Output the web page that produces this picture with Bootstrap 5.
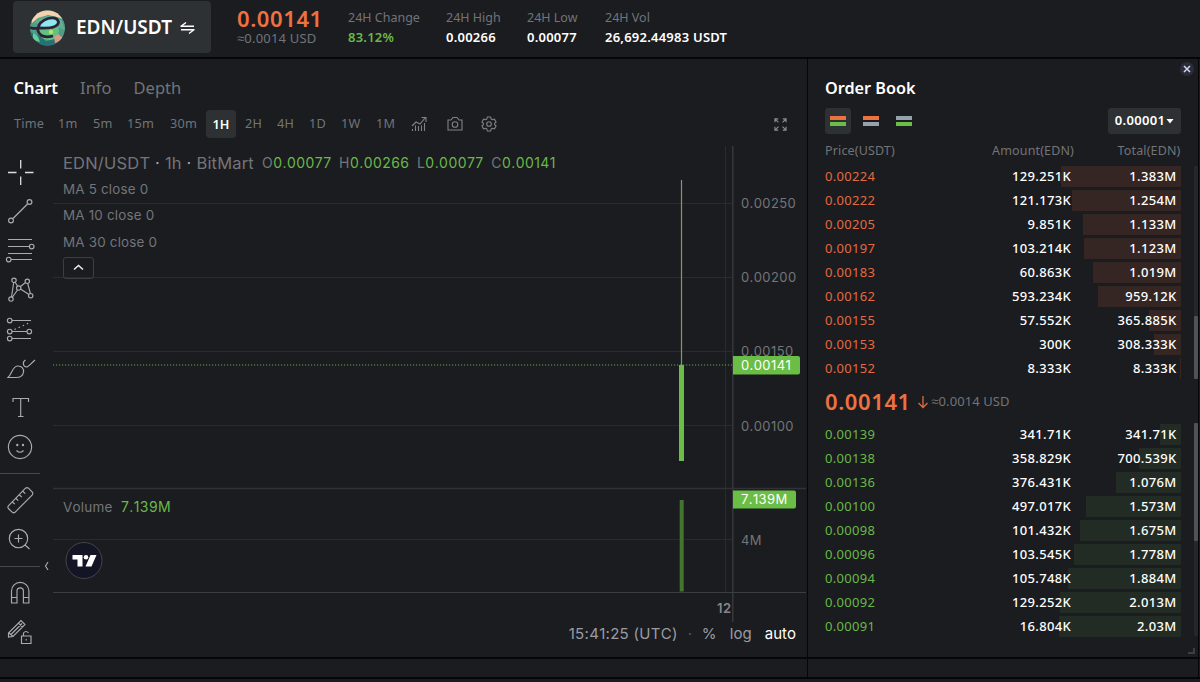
<!DOCTYPE html>
<html lang="en">
<head>
<meta charset="utf-8">
<title>EDN/USDT</title>
<link href="https://cdn.jsdelivr.net/npm/bootstrap@5.3.0/dist/css/bootstrap.min.css" rel="stylesheet">
<style>
:root{--bg:#1b1c1f;--chip:#2d3133;--dim:#717479;--up:#6abd45;--down:#ee7140}
body{background:var(--bg);color:#fff;font-family:"Noto Sans",sans-serif;font-size:13px;letter-spacing:.025em;width:1200px;height:682px;overflow:hidden;line-height:1.2}
.dim{color:var(--dim)}.up{color:#69b84a}.down{color:#e26a42}
.topbar{height:59px;border-bottom:2px solid #060607;padding-left:13px}
.pair{width:198px;height:52px;background:var(--chip);border-radius:4px;margin-top:1px;padding-left:17px;padding-top:1px;font-size:19px;font-weight:600;letter-spacing:0}
.last{margin-left:26px;width:111px;padding-top:5px}
.last b{font-size:22px;font-weight:600;color:var(--down);line-height:26px;letter-spacing:.6px}
.last span{font-size:13px;line-height:15px;white-space:nowrap;letter-spacing:.2px}
.stat{padding-top:8px;line-height:19px;white-space:nowrap}
.stat .dim{font-size:12.5px;letter-spacing:0;height:20px}
.stat b{font-weight:600;letter-spacing:.23px}
.left{width:807px}
.main{height:598px}
.tabs{height:57px;padding:0 13.5px;gap:22px;font-size:16.5px;letter-spacing:0}
.tabs b{font-weight:600}
.times{height:30px;font-size:12.7px;letter-spacing:.2px;padding-left:14px;margin-top:-7px}
.times span{display:block;white-space:nowrap;flex:none}
.times .on{background:var(--chip);border-radius:4px;height:28px;line-height:29px;text-align:center;font-weight:600;color:#fff}
.tools{width:53px;padding-top:14px;flex:none}
.tools svg{display:block;fill:none;stroke:#a9abb3;stroke-width:1.15}
.rule{width:40px;height:16px;padding-top:8px}
.rule i{display:block;border-top:1px solid #46484e}
.plot{font-family:Inter,sans-serif;letter-spacing:0;margin-top:7px;font-kerning:none}
.plot>svg{display:block}
.legend{left:10px;top:4px;font-size:13.4px;color:#73757a}
.legend div{height:26.2px;line-height:26px;white-space:nowrap}
.ohlc{font-size:14px;letter-spacing:.45px}
.fold{width:31px;height:22px;border:1px solid #3c3e43;border-radius:3px;margin-top:2px}
.vol{left:10px;top:353px;font-size:13.5px;color:#73757a;letter-spacing:.2px}
.foot{height:24px;font-size:15px;color:#9a9ca5;padding-right:11px}
.edge{border-right:1px solid #060607}
.book{width:392px;padding:0 17px;border:solid #060607;border-width:0 1px}
.book h2{font-size:16.2px;font-weight:600;letter-spacing:0;margin:0;padding-top:18px;line-height:22px}
.sw{width:26px;height:26px;border-radius:3px}
.sw i{display:block;width:16px;height:4px;margin:1px}
.step{width:73px;height:26px;background:var(--chip);border-radius:3px;font-weight:600}
.heads{height:30px;line-height:33px;font-size:12.5px;letter-spacing:.15px}
.rw{width:355.5px;height:24px;line-height:24px}
.rw>*{z-index:1}
.bar{position:absolute;right:0;top:2px;height:21px;z-index:0!important}
.p{width:120px}.a{width:126px;text-align:right;font-weight:500}.t{width:105.5px;text-align:right;font-weight:500}
.mid{height:41.6px}
.scr{width:4px;border-radius:1px;background:#50515b;position:absolute;left:1194px}
.close-x{left:1180px;top:62px;width:14px;height:14px;border-radius:7px;background:#292d3d}
</style>
</head>
<body class="position-relative">
<header class="topbar d-flex">
  <div class="pair d-flex align-items-center">
    <svg width="36" height="36" viewBox="0 0 36 36" style="margin-right:10px"><defs><clipPath id="c"><circle cx="17.5" cy="18" r="17.5"/></clipPath></defs><g clip-path="url(#c)"><rect width="36" height="36" fill="#4f9c87"/><path d="M0 0h36v10L27 7l-9-2L8 8l-6 5z" fill="#f4d2ae"/><path d="M4 13Q16 0 32 11L35 20 27 17z" fill="#61ad90"/><path d="M0 22l8 3 8 6 14-3 2 8H0z" fill="#267274"/><path d="M3 23q5 1 7 9l-7-2z" fill="#69c99b"/><ellipse cx="19" cy="21" rx="10" ry="9" fill="#61c17e"/><path d="M9 18Q17 5 28 10 31 20 9 18z" fill="#8beaeb"/><path d="M0 17.500Q5 19 10 18 28 19 28.500 12 27 6.500 18 8.500 7 12 8 21 11 29 23 26" fill="none" stroke="#30213b" stroke-width="2.800"/><path d="M24 27l4-3 5 4-3 4-5 1z" fill="#dc9a8a"/><circle cx="21" cy="22" r="2.2" fill="#b4e36a"/></g></svg>
    <span>EDN/USDT</span>
    <svg width="15" height="14" viewBox="0 0 15 14" class="ms-2" fill="none" stroke="#fff" stroke-width="1.4"><path d="M.5 5.200h13.500M1 5.200L6 1.500M14.500 8.800H1M14 8.800L9 12.500"/></svg>
  </div>
  <div class="last d-flex flex-column"><b>0.00141</b><span class="dim">≈0.0014 USD</span></div>
  <div class="stat" style="width:98px"><div class="dim">24H Change</div><b class="up">83.12%</b></div>
  <div class="stat" style="width:81px"><div class="dim">24H High</div><b>0.00266</b></div>
  <div class="stat" style="width:78px"><div class="dim">24H Low</div><b>0.00077</b></div>
  <div class="stat"><div class="dim">24H Vol</div><b>26,692.44983 USDT</b></div>
</header>
<main class="main d-flex">
  <section class="left">
    <nav class="tabs d-flex align-items-center"><b>Chart</b><span class="dim">Info</span><span class="dim">Depth</span></nav>
    <div class="times d-flex align-items-center dim">
      <span style="width:44px">Time</span><span style="width:35px">1m</span><span style="width:34px">5m</span><span style="width:43px">15m</span><span style="width:36px">30m</span><span class="on" style="width:30px">1H</span><span style="width:32px;margin-left:9px">2H</span><span style="width:32px">4H</span><span style="width:32px">1D</span><span style="width:35px">1W</span><span style="width:35px">1M</span>
      <svg width="16" height="16" viewBox="0 0 16 16" fill="none" stroke="#808287" stroke-width="1.1"><path d="M1 10l4-4 4 2 5-6M10.500 1.500H15V6M1.500 15v-2M4.500 15V9.500M7.500 15v-5M10.500 15V9.500M13.500 15V7"/></svg>
      <svg style="margin-left:20px" width="16" height="16" viewBox="0 0 16 16" fill="none" stroke="#808287" stroke-width="1.1"><path d="M1 4h3l2-2.500h4L12 4h3v10H1z"/><circle cx="8" cy="8.500" r="2.800"/></svg>
      <svg style="margin-left:18px" width="16" height="16" viewBox="0 0 16 16" fill="none" stroke="#808287" stroke-width="1.100" stroke-linejoin="round"><path d="M6.300 1h3.400l.4 2 1.400.8 1.900-.7 1.700 2.900-1.500 1.300v1.400l1.500 1.300-1.700 2.900-1.900-.7-1.400.8-.4 2H6.300l-.4-2-1.400-.8-1.900.7L.9 10l1.500-1.300V7.300L.9 6l1.700-2.900 1.900.7L5.900 3z"/><circle cx="8" cy="8" r="2.300"/></svg>
      <svg class="ms-auto" style="margin-right:20px" width="13" height="13" viewBox="0 0 14 14" fill="none" stroke="#8b8d91" stroke-width="1.200"><path d="M1 4.500V1h3.500M1 1l3.800 3.800M9.500 1H13v3.500M13 1L9.200 4.800M1 9.500V13h3.500M1 13l3.800-3.800M9.500 13H13V9.500M13 13L9.200 9.200"/></svg>
    </div>
    <div class="d-flex">
      <aside class="tools position-relative">
        <svg width="40" height="39" style="stroke:#dcdde1"><path d="M20.700 7v8.500M20.700 23.500V32M8 19.500h8.500M25 19.500h8.500" stroke-width="1.300"/></svg>
        <svg width="40" height="39"><path d="M13 26.500L27.500 12"/><circle cx="11" cy="28.500" r="2.400"/><circle cx="29.500" cy="10" r="2.400"/></svg>
        <svg width="40" height="39"><path d="M8 8.500h24M8 15.500h21M8 22.500h24M11 28.500h21"/><circle cx="31.700" cy="15.500" r="2.300"/><circle cx="8.700" cy="28.500" r="2.300"/></svg>
        <svg width="40" height="39"><path d="M13.700 12.500L11.500 27M15 12l2.500 4M20.500 16.500l5-4M27.700 13.500l2.700 10M20.500 19l8.500 5.500M17.500 20l-5 7"/><circle cx="14" cy="10.300" r="2.200"/><circle cx="27.300" cy="11.300" r="2.200"/><circle cx="18.700" cy="18" r="2.200"/><circle cx="30.700" cy="25.700" r="2.200"/><circle cx="11" cy="29" r="2.200"/></svg>
        <svg width="40" height="39"><path d="M12 11.500h19M12 22.500h15M12 29.500h19"/><path d="M14.500 20.500L31 13" stroke-dasharray="1.500 3"/><circle cx="9.700" cy="11.500" r="2.300"/><circle cx="9.700" cy="22.500" r="2.300"/><circle cx="29.300" cy="22.500" r="2.300"/><circle cx="9.700" cy="29.500" r="2.300"/></svg>
        <svg width="40" height="39"><path d="M8 29.500C13 25 12 18 18 18 22 18 24 21 23.500 24 23 28 20 29.500 16 29.500zM25.500 12C22 14 23 18.500 26.500 19 28 19 28.500 18 35 12"/></svg>
        <svg width="40" height="39"><path d="M13 15v-3.500h15.500V15M20.700 11.500v18M18 29.500h5.500"/></svg>
        <svg width="40" height="39"><circle cx="20" cy="21" r="11.600"/><path d="M16.500 24.500q3.500 3.500 7 0"/><circle cx="17.300" cy="19" r=".6"/><circle cx="23" cy="19" r=".6"/></svg>
        <div class="rule"><i></i></div>
        <svg width="40" height="39"><path d="M25.500 7.200q1.500-1 3 0l3.800 4q1 1.300 0 2.600L15 31.300q-1.300 1-2.600 0l-4-3.800q-1-1.300 0-2.600zM23 10.500l2.300 2.200M19.500 14l2.300 2.200M16 17.500l2.300 2.200M12.500 21l2.300 2.200"/></svg>
        <svg width="40" height="39"><circle cx="18.500" cy="18.500" r="9.200"/><path d="M25 25l4.500 4M18.500 14.500v8M14.500 18.500h8"/></svg>
        <div class="rule" style="height:15px;padding-top:7px"><i></i></div>
        <svg width="40" height="39"><path d="M11.500 29V17a8.700 8.700 0 0 1 17.400 0v12h-5.500V17a3.200 3.200 0 0 0-6.400 0v12zM11.500 23.500H17M23.400 23.500h5.500"/></svg>
        <svg width="40" height="39"><path d="M8.500 24l0-4L21 7.500l4 4L13 23.500zM9 20l4 3.500M18.500 10l4 4M11 21.500l11-11M21.500 23h9.500v7.500h-9.500zM23.500 23v-3q2.500-3 5 0"/><path d="M26.200 26v1.500"/></svg>
        <svg class="position-absolute" style="left:43px;top:422px" width="7" height="10"><path d="M5 1L2.500 5 5 9"/></svg>
      </aside>
      <div class="plot position-relative flex-grow-1">
        <svg width="753" height="476" viewBox="53 146 753 476" font-family="Inter,sans-serif" font-size="13">
          <path d="M53 203.500H732M53 277.500H732M53 351.500H732M53 425.500H732M53 539.500H732M725.500 146V592" stroke="#292b2f"/>
          <path d="M732.800 146V622" stroke="#36383d" stroke-width="1.500"/><path d="M53 488.500H806" stroke="#303237" stroke-width="1.300"/><path d="M53 592.500H806" stroke="#3b3d42"/>
          <path d="M53 365H732" stroke="#68a251" stroke-dasharray="1.200 1.800" stroke-width="1.200"/>
          <path d="M681.500 180V365" stroke="#6fa55c" stroke-width="1.200"/>
          <rect x="679" y="365" width="5" height="96" fill="#6abd45"/><rect x="679.700" y="500" width="4" height="91.500" fill="#437430"/>
          <g fill="#73757a" letter-spacing=".4"><text x="741" y="208">0.00250</text><text x="741" y="282">0.00200</text><text x="741" y="356">0.00150</text><text x="741" y="430.500">0.00100</text><text x="741" y="544.500">4M</text><text x="717" y="613" font-weight="600" fill="#85878c">12</text></g>
          <path d="M733 356H798q2 0 2 2v14.500q0 2-2 2H733zM733 490.500H794q2 0 2 2v14q0 2-2 2H733z" fill="#6abd45"/>
          <g fill="#fff" letter-spacing=".4"><text x="741" y="369.800">0.00141</text><text x="741" y="504.300">7.139M</text></g>
          <circle cx="84" cy="560.500" r="18" fill="#131524" stroke="#42444d"/>
          <path d="M72.500 555h10v11.500h-5v-7h-5zM90.500 555h6L91.500 566.500h-6z" fill="#fff"/><circle cx="86" cy="557.300" r="2.300" fill="#fff"/>
        </svg>
        <div class="legend position-absolute" style="letter-spacing:.2px">
          <div class="d-flex" style="gap:7.500px"><span style="font-size:16.500px;width:191.500px">EDN/USDT <span style="color:#aaa">·</span> 1h <span style="color:#aaa">·</span> BitMart</span><span class="ohlc">O<span class="up">0.00077</span></span><span class="ohlc">H<span class="up">0.00266</span></span><span class="ohlc">L<span class="up">0.00077</span></span><span class="ohlc">C<span class="up">0.00141</span></span></div>
          <div>MA 5 close 0</div><div>MA 10 close 0</div><div>MA 30 close 0</div>
          <button class="fold bg-transparent d-flex align-items-center justify-content-center p-0"><svg width="11" height="7" fill="none" stroke="#eee" stroke-width="1.500"><path d="M1 5.500l4.500-4 4.500 4"/></svg></button>
        </div>
        <div class="vol position-absolute d-flex"><span style="width:58px">Volume</span><span class="up" style="font-size:14px;letter-spacing:.4px">7.139M</span></div>
        <div class="foot d-flex justify-content-end align-items-center"><span style="letter-spacing:.3px">15:41:25 (UTC)</span><span class="text-center" style="width:24px;color:#53555b">·</span><span style="width:28px">%</span><span style="width:35px">log</span><span class="text-white">auto</span></div>
      </div>
    </div>
  </section>
  <section class="book position-relative">
    <h2>Order Book</h2>
    <div class="d-flex align-items-center" style="margin-top:9px;gap:7px">
      <div class="sw d-flex flex-column align-items-center justify-content-center" style="background:var(--chip)"><i style="background:#ee7140"></i><i style="background:#6abd45"></i></div>
      <div class="sw d-flex flex-column align-items-center justify-content-center"><i style="background:#ee7140"></i><i style="background:#94a2ad"></i></div>
      <div class="sw d-flex flex-column align-items-center justify-content-center"><i style="background:#94a2ad"></i><i style="background:#6abd45"></i></div>
      <div class="step ms-auto d-flex align-items-center justify-content-center" style="gap:1px"><span>0.00001</span><svg width="8" height="5"><path d="M.5 0h7L4 4.500z" fill="#fff"/></svg></div>
    </div>
    <div class="d-flex dim heads"><span class="p">Price(USDT)</span><span style="width:129px;text-align:right">Amount(EDN)</span><span style="width:106.500px;text-align:right">Total(EDN)</span></div>
    <div id="asks"></div>
    <div class="mid d-flex align-items-center"><b style="font-size:22px;font-weight:600;letter-spacing:.6px;color:var(--down)">0.00141</b><svg width="12" height="14" style="margin-left:6.500px;margin-top:3px" fill="none" stroke="#e26a42" stroke-width="1.300"><path d="M6 1v11.500M1.500 8L6 12.500 10.500 8"/></svg><span class="dim" style="font-size:13px;margin-left:2px;margin-top:1px;letter-spacing:.1px">≈0.0014 USD</span></div>
    <div id="bids"></div>
    <svg class="position-absolute" style="left:380px;top:588px" width="8" height="8"><path d="M6 1v5H0" fill="none" stroke="#3c3e42" stroke-width="2"/></svg>
  </section>
</main>
<div style="height:22px;border-top:2px solid #060607;border-bottom:2px solid #060607" class="d-flex"><div style="width:808px" class="edge"></div><div style="width:391px" class="edge"></div></div>
<div class="scr" style="top:166px;height:213px;background:#26272b"></div><div class="scr" style="top:316px;height:63px"></div>
<div class="scr" style="top:423px;height:213px;background:#26272b"></div><div class="scr" style="top:423px;height:118px"></div>
<div class="close-x position-absolute d-flex align-items-center justify-content-center"><svg width="8" height="8" stroke="#d3d6e4" stroke-width="1.500"><path d="M1 1l6 6M7 1L1 7"/></svg></div>
<script src="https://cdn.jsdelivr.net/npm/bootstrap@5.3.0/dist/js/bootstrap.bundle.min.js"></script>
<script>
const asks=[['0.00224','129.251K','1.383M'],['0.00222','121.173K','1.254M'],['0.00205','9.851K','1.133M'],['0.00197','103.214K','1.123M'],['0.00183','60.863K','1.019M'],['0.00162','593.234K','959.12K'],['0.00155','57.552K','365.885K'],['0.00153','300K','308.333K'],['0.00152','8.333K','8.333K']];
const bids=[['0.00139','341.71K','341.71K'],['0.00138','358.829K','700.539K'],['0.00136','376.431K','1.076M'],['0.00100','497.017K','1.573M'],['0.00098','101.432K','1.675M'],['0.00096','103.545K','1.778M'],['0.00094','105.748K','1.884M'],['0.00092','129.252K','2.013M'],['0.00091','16.804K','2.03M']];
function fill(id,rows,cls,color,scale){
  document.getElementById(id).innerHTML=rows.map(([p,a,t])=>{
    const w=parseFloat(t)*(t.endsWith('M')?1:.001)*scale;
    return `<div class="rw d-flex position-relative"><span class="p ${cls}">${p}</span><span class="a">${a}</span><span class="t">${t}</span><i class="bar" style="width:${w.toFixed(1)}px;background:${color}"></i></div>`}).join('');
}
fill('asks',asks,'down','#352523',86.4);
fill('bids',bids,'up','#222c24',60);
</script>
</body>
</html>
